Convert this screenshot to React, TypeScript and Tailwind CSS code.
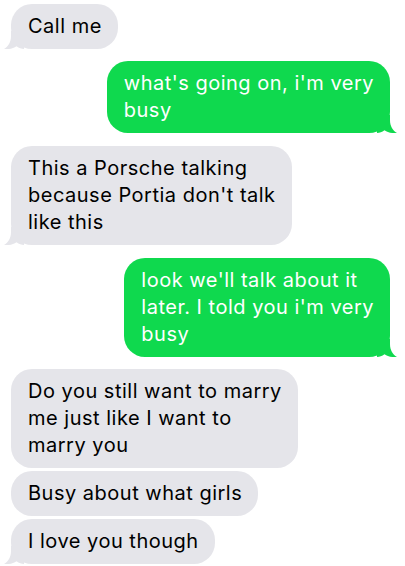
import React from 'react';

type Msg = { from: 'me' | 'them'; lines: string[]; tail: boolean; gap: string };

const messages: Msg[] = [
  { from: 'them', lines: ['Call me'], tail: true, gap: 'mt-[4px]' },
  { from: 'me', lines: ["what's going on, i'm very", 'busy'], tail: true, gap: 'mt-[12px]' },
  { from: 'them', lines: ['This a Porsche talking', "because Portia don't talk", 'like this'], tail: true, gap: 'mt-[13px]' },
  { from: 'me', lines: ["look we'll talk about it", "later. I told you i'm very", 'busy'], tail: true, gap: 'mt-[13px]' },
  { from: 'them', lines: ['Do you still want to marry', 'me just like I want to', 'marry you'], tail: false, gap: 'mt-[12px]' },
  { from: 'them', lines: ['Busy about what girls'], tail: false, gap: 'mt-[3px]' },
  { from: 'them', lines: ['I love you though'], tail: true, gap: 'mt-[3px]' },
];

function Tail({ side, color }: { side: 'left' | 'right'; color: string }) {
  // tail tip sticks out ~7px past the bubble edge at the bottom corner
  const d = 'M20 0 H7 V5 C7 11 4.5 15.5 0 18 C5 18.6 9.5 17.2 12.5 15.2 C15 17 17.5 18 20 18 Z';
  return (
    <svg
      width="20"
      height="18"
      viewBox="0 0 20 18"
      className={side === 'left' ? 'absolute left-[-7px] bottom-0' : 'absolute right-[-7px] bottom-0 -scale-x-100'}
    >
      <path d={d} fill={color} />
    </svg>
  );
}

function Bubble({ msg }: { msg: Msg }) {
  const mine = msg.from === 'me';
  return (
    <div className={`flex ${mine ? 'justify-end pr-[15px]' : 'justify-start pl-[11px]'} ${msg.gap}`}>
      <div
        className={`relative rounded-[21px] pl-[17px] pr-[16px] py-[9px] text-[20px] leading-[27px] whitespace-nowrap ${
          mine ? 'bg-[#0fd94e] text-white' : 'bg-[#e5e5ea] text-black'
        }`}
      >
        {msg.tail && <Tail side={mine ? 'right' : 'left'} color={mine ? '#0fd94e' : '#e5e5ea'} />}
        <div className="relative">
          {msg.lines.map((l, i) => (
            <div key={i}>{l}</div>
          ))}
        </div>
      </div>
    </div>
  );
}

export default function App() {
  return (
    <div className="w-[405px] h-[566px] overflow-hidden bg-white font-['Inter',sans-serif] tracking-[0.5px]">
      {messages.map((m, i) => (
        <Bubble key={i} msg={m} />
      ))}
    </div>
  );
}
